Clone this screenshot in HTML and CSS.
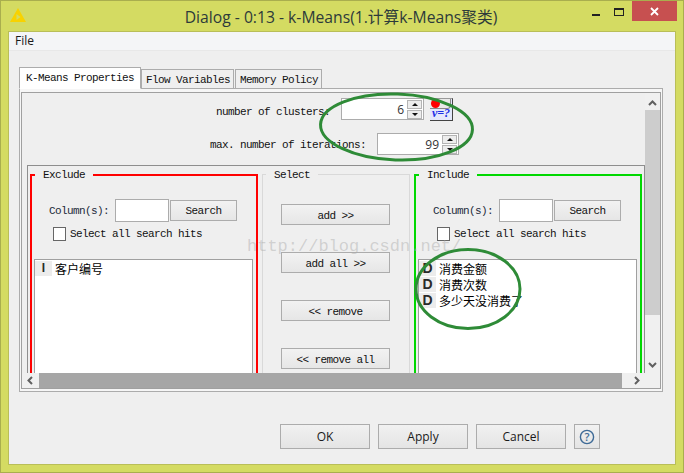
FILE: index.html
```html
<!DOCTYPE html>
<html lang="en">
<head>
<meta charset="utf-8">
<title>Dialog - 0:13 - k-Means</title>
<link rel="stylesheet" href="styles.css">
</head>
<body>
<div class="window">
  <header class="titlebar">
    <svg class="app-icon" width="16" height="14" viewBox="0 0 16 14"><path d="M8 0 16 14H0Z" fill="#f8d200"/><path d="M6.5 6 10.5 9 6.5 12Z" fill="#d4db62"/></svg>
    <div class="title">Dialog - 0:13 - k-Means(1.计算k-Means聚类)</div>
    <div class="controls">
      <span class="ctl-min"></span>
      <span class="ctl-max"></span>
      <span class="ctl-close"><svg width="9" height="9" viewBox="0 0 9 9"><path d="M1 1 8 8M8 1 1 8" stroke="#fff" stroke-width="1.8"/></svg></span>
    </div>
  </header>
  <div class="client">
    <nav class="menubar"><span>File</span></nav>
    <div class="content">
      <div class="tabs">
        <div class="tab tab-active">K-Means Properties</div>
        <div class="tab">Flow Variables</div>
        <div class="tab">Memory Policy</div>
      </div>
      <div class="tabpanel">
        <div class="scrollpane">
          <div class="viewport">
            <div class="form-row row-clusters">
              <label class="row-label label-clusters">number of clusters:</label>
              <div class="spinner spinner-clusters">
                <span class="spin-value">6</span>
                <span class="spin-btns">
                  <span class="spin-btn"><i class="tri-up"></i></span>
                  <span class="spin-btn"><i class="tri-down"></i></span>
                </span>
              </div>
              <div class="var-btn"><div class="var-top"><i class="var-dot"></i></div><div class="var-text">v=?</div></div>
            </div>
            <div class="form-row row-iter">
              <label class="row-label label-iter">max. number of iterations:</label>
              <div class="spinner spinner-iter">
                <span class="spin-value">99</span>
                <span class="spin-btns">
                  <span class="spin-btn"><i class="tri-up"></i></span>
                  <span class="spin-btn"><i class="tri-down"></i></span>
                </span>
              </div>
            </div>
            <div class="filter">
              <fieldset class="group group-exclude">
                <legend>Exclude</legend>
                <div class="search-row">
                  <span class="search-label">Column(s):</span>
                  <span class="search-input"></span>
                  <span class="btn-mono search-btn">Search</span>
                </div>
                <div class="check-row"><span class="check"></span><span>Select all search hits</span></div>
                <ul class="list">
                  <li><span class="type-icon type-i">I</span><span>客户编号</span></li>
                </ul>
              </fieldset>
              <fieldset class="group group-select">
                <legend>Select</legend>
                <div class="btn-mono move-btn move-first">add &gt;&gt;</div>
                <div class="btn-mono move-btn">add all &gt;&gt;</div>
                <div class="btn-mono move-btn">&lt;&lt; remove</div>
                <div class="btn-mono move-btn">&lt;&lt; remove all</div>
              </fieldset>
              <fieldset class="group group-include">
                <legend>Include</legend>
                <div class="search-row">
                  <span class="search-label">Column(s):</span>
                  <span class="search-input"></span>
                  <span class="btn-mono search-btn">Search</span>
                </div>
                <div class="check-row"><span class="check"></span><span>Select all search hits</span></div>
                <ul class="list">
                  <li><span class="type-icon">D</span><span>消费金额</span></li>
                  <li><span class="type-icon">D</span><span>消费次数</span></li>
                  <li><span class="type-icon">D</span><span>多少天没消费了</span></li>
                </ul>
              </fieldset>
            </div>
          </div>
          <div class="vbar">
            <svg class="arrow" width="9" height="6" viewBox="0 0 9 6"><path d="M1 5 4.5 1.5 8 5" fill="none" stroke="#606060" stroke-width="2"/></svg>
            <div class="vthumb"></div>
            <svg class="arrow arrow-last" width="9" height="6" viewBox="0 0 9 6"><path d="M1 1 4.5 4.5 8 1" fill="none" stroke="#606060" stroke-width="2"/></svg>
          </div>
          <div class="hbar">
            <svg class="arrow" width="6" height="9" viewBox="0 0 6 9"><path d="M5 1 1.5 4.5 5 8" fill="none" stroke="#606060" stroke-width="2"/></svg>
            <div class="hthumb"></div>
            <svg class="arrow" width="6" height="9" viewBox="0 0 6 9"><path d="M1 1 4.5 4.5 1 8" fill="none" stroke="#606060" stroke-width="2"/></svg>
          </div>
          <div class="corner"></div>
        </div>
      </div>
      <div class="footer">
        <div class="btn">OK</div>
        <div class="btn">Apply</div>
        <div class="btn">Cancel</div>
        <div class="btn btn-help">
          <svg width="16" height="16" viewBox="0 0 16 16"><circle cx="8" cy="8" r="6.6" fill="none" stroke="#3e6a96" stroke-width="1.4"/><text x="8" y="12" text-anchor="middle" class="help-mark">?</text></svg>
        </div>
      </div>
    </div>
  </div>
  <div class="watermark">http://blog.csdn.net/</div>
  <svg class="annotations" width="684" height="473" viewBox="0 0 684 473">
    <ellipse cx="396.5" cy="127" rx="76" ry="33" transform="rotate(2 396.5 127)" />
    <ellipse cx="468" cy="289" rx="52" ry="39.5" />
  </svg>
</div>
</body>
</html>
```
FILE: styles.css
```css
* { box-sizing: border-box; }
html, body { margin: 0; padding: 0; }
body { width: 684px; height: 473px; overflow: hidden; font-family: "Liberation Mono", "Noto Sans CJK SC", monospace; font-size: 11px; letter-spacing: -0.6px; color: #111; }

.window { position: relative; width: 684px; height: 473px; display: flex; flex-direction: column; background: #d4db62; border: 1px solid #a9ae4e; padding: 0 7px 7px; }

.titlebar { position: relative; flex: 0 0 30px; display: flex; align-items: center; justify-content: center; }
.app-icon { position: absolute; left: 2px; top: 7px; }
.title { font-family: "Open Sans", "Noto Sans CJK SC", sans-serif; font-size: 15.7px; letter-spacing: 0; color: #2d3a3a; margin: 1px 2px 0 0; white-space: nowrap; }
.controls { position: absolute; right: -1px; top: 0; display: flex; align-items: flex-start; }
.ctl-min { width: 8px; height: 2px; background: #222; margin: 13px 14px 0 0; }
.ctl-max { width: 10px; height: 8px; border: 1px solid #222; border-top-width: 2px; margin: 7px 8px 0 0; }
.ctl-close { width: 45px; height: 20px; background: #c75050; display: flex; align-items: center; justify-content: center; }

.client { flex: 1; display: flex; flex-direction: column; background: #efefef; border: 1px solid #b9be58; }
.menubar { height: 19px; background: #f4f5f7; border-bottom: 1px solid #e8e8e8; padding-left: 6px; font-family: "Open Sans", sans-serif; font-size: 12px; letter-spacing: 0; line-height: 18px; color: #1a1a1a; }

.content { flex: 1; display: flex; flex-direction: column; padding: 16px 0 0 10px; }
.tabs { display: flex; align-items: flex-end; height: 22px; position: relative; z-index: 1; margin-bottom: -1px; }
.tab { height: 20px; background: #efefef; border: 1px solid #acacac; padding: 0 3px 0 4px; line-height: 20px; margin-right: 1px; white-space: nowrap; }
.tab-active { height: 22px; width: 122px; margin-right: 0; background: #fff; border-bottom-color: #fff; padding: 0 6px; line-height: 20px; }

.tabpanel { width: 644px; height: 304px; border: 1px solid #acacac; background: #f6f6f6; padding: 3px 1px 2px 1px; }
.scrollpane { width: 640px; height: 297px; border: 1px solid #a0a0a0; display: grid; grid-template-columns: 623px 15px; grid-template-rows: 280px 15px; background: #efefef; }

.viewport { overflow: hidden; }
.form-row { display: flex; align-items: center; height: 22px; }
.row-clusters { margin-top: 5px; padding-left: 194px; }
.row-iter { margin-top: 13px; padding-left: 188px; }
.label-clusters { width: 125px; padding-top: 6px; }
.label-iter { width: 167px; padding-top: 2px; }

.spinner { height: 22px; background: #fff; border: 1px solid #acacac; display: flex; align-items: center; justify-content: flex-end; padding-right: 1px; font-family: "Open Sans", sans-serif; font-size: 12px; letter-spacing: 0; color: #333; }
.spinner-clusters { width: 83px; }
.spinner-iter { width: 82px; }
.spin-value { margin-right: 3px; }
.spin-btns { display: flex; flex-direction: column; gap: 1px; width: 15px; }
.spin-btn { height: 9px; background: #ededed; border: 1px solid #b4b4b4; display: flex; align-items: center; justify-content: center; }
.tri-up { width: 0; height: 0; border: 3px solid transparent; border-top: 0; border-bottom: 3px solid #111; }
.tri-down { width: 0; height: 0; border: 3px solid transparent; border-bottom: 0; border-top: 3px solid #111; }

.var-btn { flex: 0 0 23px; height: 23px; margin: 1px 0 0 6px; background: #e4e8fb; border: 1px solid #444; border-width: 1px 1px 1px 0; border-top-color: #999; display: flex; flex-direction: column; }
.var-top { flex: 0 0 10px; background: #e9e9e9; border: 1px solid #888; border-width: 0 1px 1px 0; border-bottom-right-radius: 4px; margin-right: 1px; }
.var-dot { display: block; width: 9px; height: 9px; margin: 0 0 0 1px; border-radius: 50%; background: #f00; }
.var-text { font-family: "Liberation Serif", serif; font-style: italic; font-weight: bold; font-size: 12px; letter-spacing: 0; color: #1c2fe6; line-height: 9px; text-align: center; }

.filter { margin: 10px 0 0 5px; width: 618px; height: 260px; border: 1px solid #8e8e8e; padding: 1px 2px 0; display: flex; gap: 4px; }
.group { margin: 0; padding: 0; min-width: 0; height: 230px; }
.group legend { padding: 1px 8px 0; margin-left: 3px; line-height: 14px; height: 15px; }
.group-exclude { width: 228px; border: 2px solid #f00; }
.group-select { width: 148px; border: 1px solid #d9d9d9; }
.group-include { width: 228px; border: 2px solid #00d800; }

.search-row { display: flex; align-items: center; padding-left: 17px; margin-top: 17px; }
.search-label { width: 66px; color: #1c2a3a; }
.search-input { width: 54px; height: 23px; background: #fff; border: 1px solid #acacac; margin-right: 1px; }
.btn-mono { background: linear-gradient(#f2f2f2, #e6e6e6); border: 1px solid #acacac; height: 21px; display: flex; align-items: center; justify-content: center; }
.search-btn { width: 67px; }
.check-row { display: flex; align-items: center; padding-left: 21px; margin-top: 5px; }
.check { width: 13px; height: 14px; background: #fff; border: 1px solid #666; margin-right: 4px; }

.list { list-style: none; margin: 18px 0 0 2px; padding: 0; width: 219px; height: 140px; background: #fff; border: 1px solid #a0a0a0; font-family: "Noto Sans CJK SC", sans-serif; font-size: 12px; letter-spacing: 0; color: #000; }
.list li { display: flex; align-items: center; height: 16px; }
.type-icon { width: 17px; height: 15px; margin-right: 3px; background: #ececec; color: #2a2a2a; font-family: "Liberation Sans", sans-serif; font-weight: bold; font-size: 14px; text-align: center; line-height: 15px; }
.type-i { font-size: 12px; }

.move-btn { width: 109px; margin: 27px 0 0 18px; padding-top: 2px; }
.move-first { margin-top: 22px; }

.vbar { background: #f0f0f0; display: flex; flex-direction: column; align-items: center; padding: 7px 0 5px; }
.vthumb { align-self: stretch; height: 205px; background: #cdcdcd; margin: 4px 0 auto; }
.hbar { background: #f0f0f0; display: flex; align-items: center; padding: 0 5px; }
.hthumb { width: 583px; height: 15px; background: #a6a6a6; margin: 0 auto 0 6px; }
.corner { background: #f0f0f0; }

.footer { display: flex; gap: 8px; margin: 32px 0 0 261px; }
.btn { width: 90px; height: 25px; background: linear-gradient(#f1f1f1, #e4e4e4); border: 1px solid #acacac; font-family: "Open Sans", sans-serif; font-size: 12px; letter-spacing: 0; color: #1a1a1a; display: flex; align-items: center; justify-content: center; }
.btn-help { width: 26px; }
.help-mark { font-family: "Open Sans", sans-serif; font-size: 11px; font-weight: 600; fill: #3e6a96; }

.watermark { position: absolute; left: 246px; top: 236px; font-size: 17px; letter-spacing: 0; color: rgba(170, 170, 170, .45); pointer-events: none; }
.annotations { position: absolute; left: -1px; top: -1px; pointer-events: none; }
.annotations ellipse { fill: none; stroke: #2e8b37; stroke-width: 3; }
```
